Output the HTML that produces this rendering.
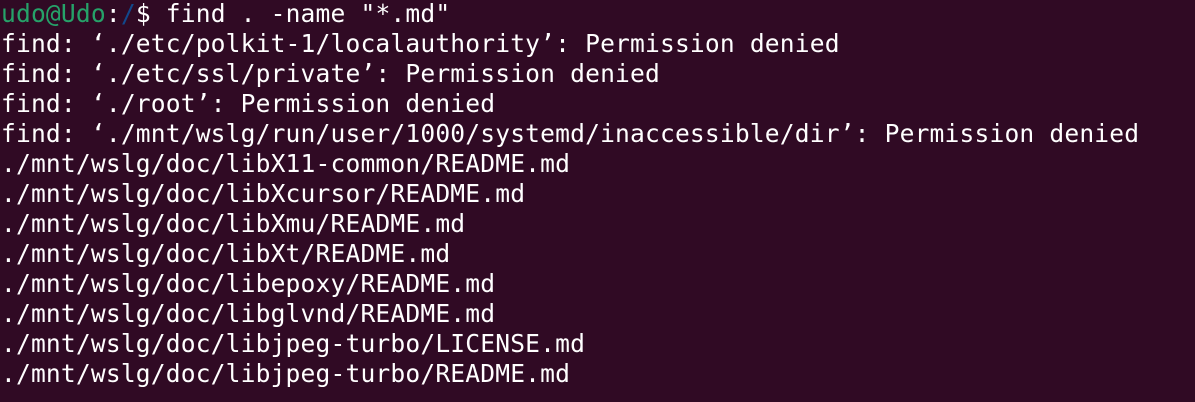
<!DOCTYPE html>
<html><head><style>
html,body{margin:0;padding:0;background:#300a24;width:1195px;height:402px;overflow:hidden}
pre{margin:0;padding:0 0 0 1px;position:relative;top:-1px;font-family:"DejaVu Sans Mono","Liberation Mono",monospace;font-size:24.6px;line-height:30px;color:#ffffff;letter-spacing:0.17px}
.g{color:#26a269}.b{color:#12488b}
</style></head><body><pre><span class="g">udo@Udo</span>:<span class="b">/</span>$ find . -name "*.md"
find: ‘./etc/polkit-1/localauthority’: Permission denied
find: ‘./etc/ssl/private’: Permission denied
find: ‘./root’: Permission denied
find: ‘./mnt/wslg/run/user/1000/systemd/inaccessible/dir’: Permission denied
./mnt/wslg/doc/libX11-common/README.md
./mnt/wslg/doc/libXcursor/README.md
./mnt/wslg/doc/libXmu/README.md
./mnt/wslg/doc/libXt/README.md
./mnt/wslg/doc/libepoxy/README.md
./mnt/wslg/doc/libglvnd/README.md
./mnt/wslg/doc/libjpeg-turbo/LICENSE.md
./mnt/wslg/doc/libjpeg-turbo/README.md</pre></body></html>
